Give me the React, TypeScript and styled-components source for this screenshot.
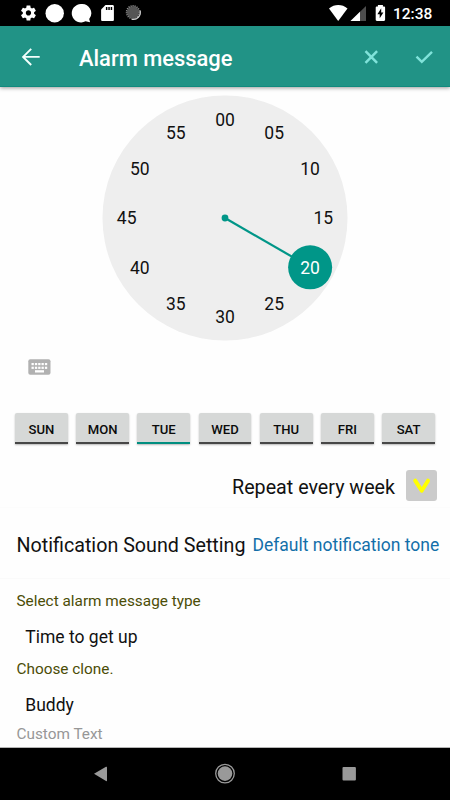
import React from "react";
import styled, { createGlobalStyle } from "styled-components";

const GlobalStyle = createGlobalStyle`
  * { box-sizing: border-box; }
  html, body { margin: 0; padding: 0; background: #fefefe; }
  body { font-family: Roboto, "Noto Sans", sans-serif; color: #111; overflow: hidden; }
`;

const Screen = styled.div`
  width: 450px;
  height: 800px;
  display: flex;
  flex-direction: column;
  overflow: hidden;
  background: #fefefe;
`;

const StatusBar = styled.header`
  height: 26px;
  flex: none;
  background: #000;
  color: #fff;
  display: flex;
  justify-content: space-between;
  svg { display: block; flex: none; }
`;

const StatusRight = styled.div`
  display: flex;
  padding-right: 17px;
`;

const Time = styled.span`
  width: 40px;
  font-size: 15.5px;
  font-weight: 500;
  line-height: 28px;
  white-space: nowrap;
`;

const AppBar = styled.div`
  height: 61px;
  flex: none;
  background: #219386;
  border-bottom: 1px solid #118a7e;
  box-shadow: 0 1px 4px rgba(0, 0, 0, 0.4);
  display: flex;
  align-items: center;
  padding: 0 16px 0 20px;
  svg { display: block; flex: none; }
`;

const Title = styled.h1`
  margin: 0 0 0 38px;
  padding-top: 5px;
  flex: 1;
  font-size: 21.9px;
  line-height: 28px;
  font-weight: 500;
  color: #fff;
  white-space: nowrap;
`;

const Actions = styled.div`
  display: flex;
  gap: 32px;
`;

const Content = styled.main`
  flex: 1;
  min-height: 0;
  display: flex;
  flex-direction: column;
  border-bottom: 1px solid #b4b4b4;
`;

const ClockArea = styled.div`
  height: 255px;
  flex: none;
  display: flex;
  justify-content: center;
  padding-top: 8px;
  text { font-family: Roboto, sans-serif; font-size: 17.5px; text-anchor: middle; }
`;

const KeyboardRow = styled.div`
  height: 71px;
  flex: none;
  padding: 17px 0 0 28px;
  svg { display: block; }
`;

const DayRow = styled.div`
  flex: none;
  height: 57px;
  display: grid;
  grid-template-columns: repeat(7, 1fr);
  column-gap: 8.4px;
  padding: 0 15px;
  align-items: start;
`;

const DayButton = styled.button<{ $on?: boolean }>`
  height: 31px;
  padding: 5px 0 0;
  border: 0;
  border-bottom: 2px solid ${(p) => (p.$on ? "#008e80" : "#474747")};
  border-radius: 2px 2px 0 0;
  background: #d6d8d7;
  box-shadow: 0 1px 2px rgba(0, 0, 0, 0.28);
  color: #0b0b0b;
  font: 500 13.1px/24px Roboto, sans-serif;
`;

const RepeatRow = styled.label`
  flex: none;
  height: 38px;
  display: flex;
  justify-content: flex-end;
  align-items: flex-start;
  gap: 11px;
  padding-right: 13px;
  font-size: 19.7px;
  line-height: 36px;
  border-bottom: 1px solid #fcfcfc;
`;

const CheckBox = styled.span`
  width: 31px;
  height: 31px;
  border-radius: 3px;
  background: #cbcbcb;
  svg { display: block; }
`;

const SoundRow = styled.div`
  flex: none;
  height: 71px;
  display: flex;
  align-items: center;
  padding: 4px 0 0 16.5px;
  gap: 7px;
  white-space: nowrap;
  border-bottom: 1px solid #fafafa;
`;

const SoundLabel = styled.span`
  font-size: 19.7px;
`;

const SoundLink = styled.span`
  font-size: 17.5px;
  color: #136fa9;
`;

const Caption = styled.div<{ $muted?: boolean }>`
  flex: none;
  padding-left: 16.5px;
  font-size: 15.35px;
  line-height: 22px;
  color: ${(p) => (p.$muted ? "#979797" : "#4c4d07")};
`;

const Choice = styled.div`
  flex: none;
  padding-left: 25.3px;
  font-size: 17.5px;
  line-height: 24px;
`;

const Fields = styled.section`
  display: flex;
  flex-direction: column;
  padding-top: 11px;
`;

const FieldGroup = styled.div<{ $h: number; $gap: number }>`
  height: ${(p) => p.$h}px;
  display: flex;
  flex-direction: column;
  gap: ${(p) => p.$gap}px;
`;

const NavBar = styled.nav`
  height: 52px;
  flex: none;
  background: #000;
  svg { display: block; }
`;

const minutes = ["00", "05", "10", "15", "20", "25", "30", "35", "40", "45", "50", "55"];
const days = ["SUN", "MON", "TUE", "WED", "THU", "FRI", "SAT"];

const Notifications = () => (
  <svg width="150" height="26" viewBox="0 0 150 26" fill="#fff">
    <g transform="translate(19.4 3.9) scale(.755)">
      <path d="M19.43 12.98c.04-.32.07-.64.07-.98s-.03-.66-.07-.98l2.11-1.65c.19-.15.24-.42.12-.64l-2-3.46c-.12-.22-.39-.3-.61-.22l-2.49 1c-.52-.4-1.08-.73-1.69-.98l-.38-2.65C14.46 2.18 14.25 2 14 2h-4c-.25 0-.46.18-.49.42l-.38 2.65c-.61.25-1.17.59-1.69.98l-2.49-1c-.23-.09-.49 0-.61.22l-2 3.46c-.13.22-.07.49.12.64l2.11 1.65c-.04.32-.07.65-.07.98s.03.66.07.98l-2.11 1.65c-.19.15-.24.42-.12.64l2 3.46c.12.22.39.3.61.22l2.49-1c.52.4 1.08.73 1.69.98l.38 2.65c.03.24.24.42.49.42h4c.25 0 .46-.18.49-.42l.38-2.65c.61-.25 1.17-.59 1.69-.98l2.49 1c.23.09.49 0 .61-.22l2-3.46c.12-.22.07-.49-.12-.64l-2.11-1.65zM12 15.5c-1.93 0-3.5-1.57-3.5-3.5s1.57-3.5 3.5-3.5 3.5 1.57 3.5 3.5-1.57 3.5-3.5 3.5z" />
    </g>
    <circle cx="54.7" cy="13.2" r="9.2" />
    <path d="M81 4a9.2 9.2 0 1 0 4.5 17.2l4.6 1-.9-3.3A9.2 9.2 0 0 0 81 4z" />
    <path d="M105.5 5h7c.8 0 1.4.6 1.4 1.3v13.4c0 .7-.6 1.3-1.4 1.3h-10c-.8 0-1.400-.6-1.400-1.300V9.500z" />
    <path d="M105.900 7h1.500v3h-1.500zM108.300 7h1.500v3h-1.500zM110.700 7h1.500v3h-1.500z" fill="#000" />
    <path d="M140 10.500a7 7 0 0 1-8.300 8.700" fill="none" stroke="#e4e4e4" strokeWidth="1.300" />
    <circle cx="133" cy="12.300" r="6" fill="#555" />
    <circle cx="133" cy="12.300" r="6.500" fill="none" stroke="#949494" strokeWidth="1.500" strokeDasharray="1.100 1" />
  </svg>
);

const Signals = () => (
  <svg width="64" height="26" viewBox="0 0 64 26" fill="#fff">
    <path d="M0 8.500C5.500 3.900 13 3.900 18.500 8.500L9.200 21z" />
    <path d="M37 6v15H21.500z" fill="#4d4d4d" />
    <path d="M31 11.800V21h-9.500z" />
    <path d="M48.900 5h5v1.400h1c.8 0 1.200.5 1.200 1.200v12.200c0 .7-.5 1.200-1.200 1.200h-7c-.7 0-1.200-.5-1.200-1.200V7.600c0-.7.500-1.200 1.200-1.200h1z" />
    <path d="M52.200 8.300l-3.800 5.900h2.300V18.300l3.700-5.800h-2.200z" fill="#000" />
  </svg>
);

const Clock = () => {
  const at = (i: number) => {
    const a = (i * Math.PI) / 6;
    return { x: 123 + 98.3 * Math.sin(a), y: 123 - 98.3 * Math.cos(a) };
  };
  const hand = at(4);
  return (
    <svg width="246" height="246" viewBox="0 0 246 246">
      <circle cx="123" cy="123" r="122.500" fill="#eee" />
      <path d={`M123 123L${hand.x} ${hand.y}`} stroke="#009688" strokeWidth="2.200" />
      <circle cx="123" cy="123" r="3.400" fill="#009688" />
      <circle cx={hand.x} cy={hand.y + 0.2} r="22" fill="#009688" />
      {minutes.map((m, i) => (
        <text key={m} x={at(i).x} y={at(i).y + 6.4} fill={i === 4 ? "#fff" : "#111"}>
          {m}
        </text>
      ))}
    </svg>
  );
};

const Keyboard = () => (
  <svg width="23" height="17" viewBox="0 0 23 17">
    <rect x=".3" y=".2" width="22.200" height="15.600" rx="2" fill="#b1b1b1" />
    {[4, 7.7].map((y) =>
      [3.5, 6.9, 10.2, 13.5, 16.9].map((x) => (
        <rect key={`${x}-${y}`} x={x} y={y} width="2.300" height="2.200" fill="#fff" />
      ))
    )}
    <rect x="7" y="11.200" width="9" height="2.300" fill="#fff" />
  </svg>
);

export default function App() {
  return (
    <>
      <GlobalStyle />
      <Screen>
        <StatusBar>
          <Notifications />
          <StatusRight>
            <Signals />
            <Time>12:38</Time>
          </StatusRight>
        </StatusBar>
        <AppBar>
          <svg width="21" height="21" viewBox="0 0 21 21" fill="none" stroke="#f4fffd" strokeWidth="1.900">
            <path d="M19.700 10.900H3M11.200 2.800L3.100 10.900l8.100 8.100" />
          </svg>
          <Title>Alarm message</Title>
          <Actions>
            <svg width="20" height="20" viewBox="0 0 20 20" stroke="#80e3da" strokeWidth="2.500">
              <path d="M3.500 5.200l11.600 11.600M15.100 5.200L3.500 16.800" />
            </svg>
            <svg width="20" height="20" viewBox="0 0 20 20" fill="none" stroke="#80e3da" strokeWidth="2.400">
              <path d="M2.500 10.600l5.300 5.200L18 5.800" />
            </svg>
          </Actions>
        </AppBar>
        <Content>
          <ClockArea>
            <Clock />
          </ClockArea>
          <KeyboardRow>
            <Keyboard />
          </KeyboardRow>
          <DayRow>
            {days.map((d) => (
              <DayButton key={d} $on={d === "TUE"}>
                {d}
              </DayButton>
            ))}
          </DayRow>
          <RepeatRow>
            Repeat every week
            <CheckBox>
              <svg width="31" height="31" viewBox="0 0 31 31" fill="none" stroke="#ff0" strokeWidth="4" strokeLinecap="round" strokeLinejoin="round">
                <path d="M9.200 10.700l6.500 10 6.300-10" />
              </svg>
            </CheckBox>
          </RepeatRow>
          <SoundRow>
            <SoundLabel>Notification Sound Setting</SoundLabel>
            <SoundLink>Default notification tone</SoundLink>
          </SoundRow>
          <Fields>
            <FieldGroup $h={68} $gap={13}>
              <Caption>Select alarm message type</Caption>
              <Choice>Time to get up</Choice>
            </FieldGroup>
            <FieldGroup $h={65} $gap={13}>
              <Caption>Choose clone.</Caption>
              <Choice>Buddy</Choice>
            </FieldGroup>
            <Caption $muted>Custom Text</Caption>
          </Fields>
        </Content>
        <NavBar>
          <svg width="450" height="52" viewBox="0 0 450 52" fill="#999">
            <path d="M94 25.700l12-6.900q1-.5 1 .5v13.200q0 1-1 .5z" />
            <circle cx="225" cy="25.600" r="9.300" fill="none" stroke="#999" strokeWidth="1.300" />
            <circle cx="225" cy="25.600" r="7.300" />
            <rect x="342.500" y="19" width="13.400" height="13.600" rx="1" />
          </svg>
        </NavBar>
      </Screen>
    </>
  );
}
